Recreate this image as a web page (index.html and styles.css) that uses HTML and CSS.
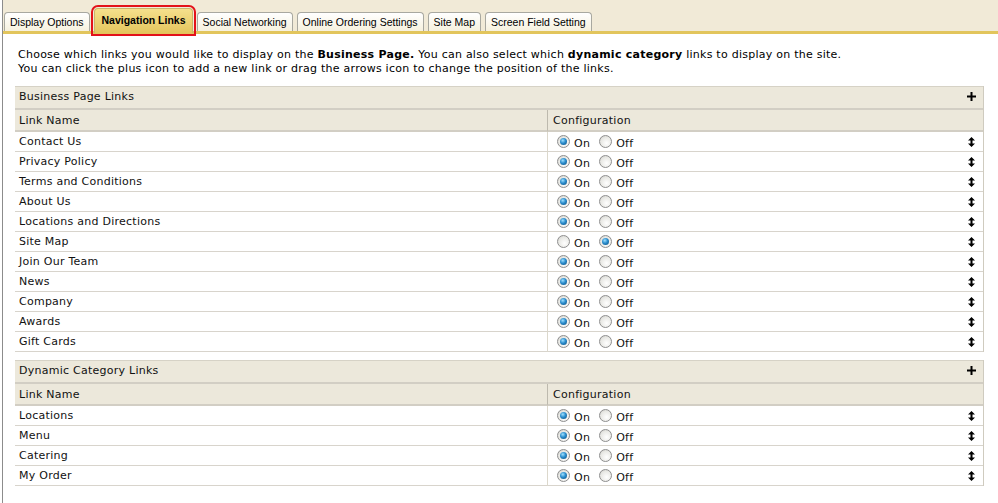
FILE: index.html
```html
<!DOCTYPE html>
<html>
<head>
<meta charset="utf-8">
<title>Navigation Links</title>
<link rel="stylesheet" href="styles.css">
</head>
<body>
<div class="page">
  <div class="tabs">
    <span class="tab">Display Options</span>
    <span class="tab active">Navigation Links</span>
    <span class="tab">Social Networking</span>
    <span class="tab">Online Ordering Settings</span>
    <span class="tab">Site Map</span>
    <span class="tab">Screen Field Setting</span>
  </div>
  <div class="content">
    <p class="intro">Choose which links you would like to display on the <b>Business Page.</b> You can also select which <b>dynamic category</b> links to display on the site.<br>You can click the plus icon to add a new link or drag the arrows icon to change the position of the links.</p>

    <table class="links">
      <thead>
        <tr class="section"><th colspan="2"><div class="section-inner"><span>Business Page Links</span><svg class="plus" width="9" height="9" viewBox="0 0 9 9"><path d="M3.5 0h2v3.5H9v2H5.5V9h-2V5.5H0v-2h3.5z"/></svg></div></th></tr>
        <tr class="cols"><th class="name">Link Name</th><th class="config">Configuration</th></tr>
      </thead>
      <tbody>
        <tr><td class="name">Contact Us</td><td class="config"><div class="cfg"><label><input type="radio" name="b1" checked>On</label><label><input type="radio" name="b1">Off</label><svg class="drag" width="7" height="10" viewBox="0 0 7 10"><path d="M3.5 0L7 3.5H4.5v3H7L3.5 10 0 6.5h2.5v-3H0z"/></svg></div></td></tr>
        <tr><td class="name">Privacy Policy</td><td class="config"><div class="cfg"><label><input type="radio" name="b2" checked>On</label><label><input type="radio" name="b2">Off</label><svg class="drag" width="7" height="10" viewBox="0 0 7 10"><path d="M3.5 0L7 3.5H4.5v3H7L3.5 10 0 6.5h2.5v-3H0z"/></svg></div></td></tr>
        <tr><td class="name">Terms and Conditions</td><td class="config"><div class="cfg"><label><input type="radio" name="b3" checked>On</label><label><input type="radio" name="b3">Off</label><svg class="drag" width="7" height="10" viewBox="0 0 7 10"><path d="M3.5 0L7 3.5H4.5v3H7L3.5 10 0 6.5h2.5v-3H0z"/></svg></div></td></tr>
        <tr><td class="name">About Us</td><td class="config"><div class="cfg"><label><input type="radio" name="b4" checked>On</label><label><input type="radio" name="b4">Off</label><svg class="drag" width="7" height="10" viewBox="0 0 7 10"><path d="M3.5 0L7 3.5H4.5v3H7L3.5 10 0 6.5h2.5v-3H0z"/></svg></div></td></tr>
        <tr><td class="name">Locations and Directions</td><td class="config"><div class="cfg"><label><input type="radio" name="b5" checked>On</label><label><input type="radio" name="b5">Off</label><svg class="drag" width="7" height="10" viewBox="0 0 7 10"><path d="M3.5 0L7 3.5H4.5v3H7L3.5 10 0 6.5h2.5v-3H0z"/></svg></div></td></tr>
        <tr><td class="name">Site Map</td><td class="config"><div class="cfg"><label><input type="radio" name="b6">On</label><label><input type="radio" name="b6" checked>Off</label><svg class="drag" width="7" height="10" viewBox="0 0 7 10"><path d="M3.5 0L7 3.5H4.5v3H7L3.5 10 0 6.5h2.5v-3H0z"/></svg></div></td></tr>
        <tr><td class="name">Join Our Team</td><td class="config"><div class="cfg"><label><input type="radio" name="b7" checked>On</label><label><input type="radio" name="b7">Off</label><svg class="drag" width="7" height="10" viewBox="0 0 7 10"><path d="M3.5 0L7 3.5H4.5v3H7L3.5 10 0 6.5h2.5v-3H0z"/></svg></div></td></tr>
        <tr><td class="name">News</td><td class="config"><div class="cfg"><label><input type="radio" name="b8" checked>On</label><label><input type="radio" name="b8">Off</label><svg class="drag" width="7" height="10" viewBox="0 0 7 10"><path d="M3.5 0L7 3.5H4.5v3H7L3.5 10 0 6.5h2.5v-3H0z"/></svg></div></td></tr>
        <tr><td class="name">Company</td><td class="config"><div class="cfg"><label><input type="radio" name="b9" checked>On</label><label><input type="radio" name="b9">Off</label><svg class="drag" width="7" height="10" viewBox="0 0 7 10"><path d="M3.5 0L7 3.5H4.5v3H7L3.5 10 0 6.5h2.5v-3H0z"/></svg></div></td></tr>
        <tr><td class="name">Awards</td><td class="config"><div class="cfg"><label><input type="radio" name="b10" checked>On</label><label><input type="radio" name="b10">Off</label><svg class="drag" width="7" height="10" viewBox="0 0 7 10"><path d="M3.5 0L7 3.5H4.5v3H7L3.5 10 0 6.5h2.5v-3H0z"/></svg></div></td></tr>
        <tr><td class="name">Gift Cards</td><td class="config"><div class="cfg"><label><input type="radio" name="b11" checked>On</label><label><input type="radio" name="b11">Off</label><svg class="drag" width="7" height="10" viewBox="0 0 7 10"><path d="M3.5 0L7 3.5H4.5v3H7L3.5 10 0 6.5h2.5v-3H0z"/></svg></div></td></tr>
      </tbody>
    </table>

    <table class="links">
      <thead>
        <tr class="section"><th colspan="2"><div class="section-inner"><span>Dynamic Category Links</span><svg class="plus" width="9" height="9" viewBox="0 0 9 9"><path d="M3.5 0h2v3.5H9v2H5.5V9h-2V5.5H0v-2h3.5z"/></svg></div></th></tr>
        <tr class="cols"><th class="name">Link Name</th><th class="config">Configuration</th></tr>
      </thead>
      <tbody>
        <tr><td class="name">Locations</td><td class="config"><div class="cfg"><label><input type="radio" name="d1" checked>On</label><label><input type="radio" name="d1">Off</label><svg class="drag" width="7" height="10" viewBox="0 0 7 10"><path d="M3.5 0L7 3.5H4.5v3H7L3.5 10 0 6.5h2.5v-3H0z"/></svg></div></td></tr>
        <tr><td class="name">Menu</td><td class="config"><div class="cfg"><label><input type="radio" name="d2" checked>On</label><label><input type="radio" name="d2">Off</label><svg class="drag" width="7" height="10" viewBox="0 0 7 10"><path d="M3.5 0L7 3.5H4.5v3H7L3.5 10 0 6.5h2.5v-3H0z"/></svg></div></td></tr>
        <tr><td class="name">Catering</td><td class="config"><div class="cfg"><label><input type="radio" name="d3" checked>On</label><label><input type="radio" name="d3">Off</label><svg class="drag" width="7" height="10" viewBox="0 0 7 10"><path d="M3.5 0L7 3.5H4.5v3H7L3.5 10 0 6.5h2.5v-3H0z"/></svg></div></td></tr>
        <tr><td class="name">My Order</td><td class="config"><div class="cfg"><label><input type="radio" name="d4" checked>On</label><label><input type="radio" name="d4">Off</label><svg class="drag" width="7" height="10" viewBox="0 0 7 10"><path d="M3.5 0L7 3.5H4.5v3H7L3.5 10 0 6.5h2.5v-3H0z"/></svg></div></td></tr>
      </tbody>
    </table>
  </div>
</div>
</body>
</html>
```
FILE: styles.css
```css
html, body {
  margin: 0;
  padding: 0;
  background: #ffffff;
}
body {
  font-family: "DejaVu Sans", Verdana, sans-serif;
  font-size: 11px;
  letter-spacing: 0.25px;
  color: #111;
}
.page {
  margin-left: 2px;
  border-left: 1px solid #8c8c8c;
  min-height: 503px;
  box-sizing: border-box;
}
.tabs {
  display: flex;
  align-items: flex-end;
  gap: 4px;
  height: 31px;
  padding-left: 1px;
  background: #f1ead7;
  border-bottom: 3px solid #e2c55c;
  box-sizing: content-box;
  letter-spacing: 0;
}
.tab {
  font-family: "Liberation Sans", Arial, sans-serif;
  font-size: 10.5px;
  color: #000;
  height: 18px;
  line-height: 19px;
  padding: 0 5px;
  border: 1px solid #a8a8a0;
  border-bottom: none;
  border-radius: 4px 4px 0 0;
  background: linear-gradient(#ffffff, #f6f1de);
  white-space: nowrap;
}
.tab.active {
  font-weight: bold;
  height: 24px;
  line-height: 22px;
  padding: 0 6px 0 7px;
  margin-bottom: -2px;
  border-color: #c9b46a;
  background: linear-gradient(#f5e08c, #e4c65e);
  outline: 2px solid #e3121a;
  outline-offset: 1px;
}
.content {
  padding: 14px 0 0 12px;
}
.intro {
  margin: 0 0 10px 3px;
  line-height: 14px;
  color: #000;
}
.intro b {
  font-weight: bold;
}
.links {
  width: 969px;
  border-collapse: separate;
  border-spacing: 0;
  margin-bottom: 8px;
  border-right: 1px solid #cfcbbf;
}
.links th {
  font-weight: normal;
  text-align: left;
  background: #ece8db;
  padding: 0 0 0 4px;
}
.section th {
  height: 19px;
  padding-bottom: 2px;
  border-top: 1px solid #d6d2c6;
  border-bottom: 2px solid #d2cec4;
}
.section-inner {
  display: flex;
  align-items: center;
  justify-content: space-between;
  padding-right: 7px;
}
.plus {
  display: block;
  fill: #000;
}
.cols th {
  height: 20px;
  border-bottom: 2px solid #d2cec4;
}
.links th.name, .links td.name {
  width: 528px;
}
.links th.config {
  border-left: 1px solid #bdb9ad;
  padding-left: 5px;
}
.links td {
  height: 19px;
  padding: 0 0 0 4px;
  border-bottom: 1px solid #d8d4cc;
}
.links td.config {
  border-left: 1px solid #dcd8cc;
  padding-left: 9px;
}
.cfg {
  display: flex;
  align-items: center;
  padding-right: 8px;
}
.cfg label {
  display: flex;
  align-items: center;
  margin-right: 9px;
  padding-top: 3px;
  color: #111;
}
.cfg label input {
  margin: -3px 4px 0 0;
}
.drag {
  display: block;
  margin-left: auto;
  fill: #000;
}
input[type="radio"] {
  -webkit-appearance: none;
  appearance: none;
  width: 13px;
  height: 13px;
  border-radius: 50%;
  border: 1px solid #8e8e8e;
  background: radial-gradient(circle at 60% 65%, #ffffff 0%, #e8e8e4 60%, #c8c8c4 100%);
  box-sizing: border-box;
  position: relative;
}
input[type="radio"]:checked::after {
  content: "";
  position: absolute;
  left: 2px;
  top: 2px;
  width: 7px;
  height: 7px;
  border-radius: 50%;
  background: radial-gradient(circle at 40% 35%, #9ee0ff 0%, #2a8ccc 45%, #0b4e7e 100%);
}
```
